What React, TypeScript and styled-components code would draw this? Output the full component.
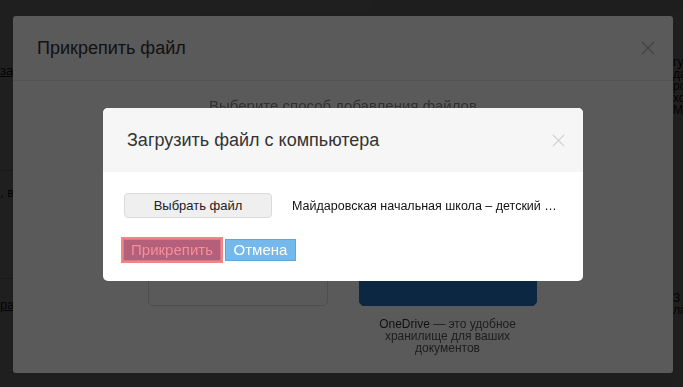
import React from 'react';
import styled, { createGlobalStyle } from 'styled-components';

const GlobalStyle = createGlobalStyle`
  html, body {
    margin: 0;
    padding: 0;
    overflow: hidden;
  }
  body {
    font-family: "Liberation Sans", Arial, sans-serif;
    color: #222;
  }
  * {
    box-sizing: border-box;
  }
`;

const App: React.FC = () => {
  return (
    <>
      <GlobalStyle />
      <Page>
        <TopStrip />
        <PageColumns>
          <LeftCol>
            <PageLink top={51}>задание к уроку</PageLink>
            <PageRule top={92} />
            <PageText top={14}>, вчера</PageText>
            <PageRule top={78} />
            <PageLink top={18}>ранее</PageLink>
          </LeftCol>
          <RightCol>
            <RightText top={44}>
              гуманитарная
              <br />
              данные
              <br />
              роботы
              <br />
              ходить
              <br />
              Материал
            </RightText>
            <RightText top={176}>
              З
              <br />
              ладно
            </RightText>
          </RightCol>
        </PageColumns>
      </Page>

      <Overlay>
        <OuterModal>
          <OuterHeader>
            <OuterTitle>Прикрепить файл</OuterTitle>
            <CloseIcon size={14} color="#bbb" />
          </OuterHeader>
          <OuterBody>
            <Hint>Выберите способ добавления файлов</Hint>
            <Sources>
              <Source>
                <SourceCard />
              </Source>
              <Source>
                <SourceCard variant="onedrive" />
                <Caption>
                  <b>OneDrive</b> — это удобное хранилище для ваших документов
                </Caption>
              </Source>
            </Sources>
          </OuterBody>
        </OuterModal>
      </Overlay>

      <Overlay>
        <Dialog>
          <DialogHeader>
            <DialogTitle>Загрузить файл с компьютера</DialogTitle>
            <CloseIcon size={13} color="#cfcfcf" />
          </DialogHeader>
          <DialogBody>
            <FileRow>
              <ChooseButton>Выбрать файл</ChooseButton>
              <FileName>Майдаровская начальная школа – детский сад отчёт за год.docx</FileName>
            </FileRow>
            <Actions>
              <ActionButton variant="attach">Прикрепить</ActionButton>
              <ActionButton variant="cancel">Отмена</ActionButton>
            </Actions>
          </DialogBody>
        </Dialog>
      </Overlay>
    </>
  );
};

export default App;

const CloseIcon: React.FC<{ size: number; color: string }> = ({ size, color }) => (
  <svg width={size} height={size} viewBox="0 0 14 14" fill="none">
    <path d="M1 1L13 13M13 1L1 13" stroke={color} strokeWidth="1.3" />
  </svg>
);

/* page behind the modals */

const Page = styled.div`
  position: relative;
  width: 683px;
  height: 387px;
  background: #f2f2f2;
  overflow: hidden;
`;

const TopStrip = styled.div`
  width: 375px;
  height: 12px;
  background: #fff;
  border-bottom-right-radius: 10px;
`;

const PageColumns = styled.div`
  display: flex;
  justify-content: space-between;
  height: 375px;
`;

const LeftCol = styled.div`
  display: flex;
  flex-direction: column;
  width: 200px;
  background: #fff;
  font-size: 13px;
`;

const PageLink = styled.a<{ top: number }>`
  margin-top: ${p => p.top}px;
  color: #222;
  text-decoration: underline;
  line-height: 15px;
  white-space: nowrap;
`;

const PageText = styled.div<{ top: number }>`
  margin-top: ${p => p.top}px;
  line-height: 15px;
  white-space: nowrap;
`;

const PageRule = styled.div<{ top: number }>`
  margin-top: ${p => p.top}px;
  height: 1px;
  background: #ccc;
`;

const RightCol = styled.div`
  display: flex;
  flex-direction: column;
  width: 10px;
  background: #fff;
  font-size: 12px;
  line-height: 12px;
  white-space: nowrap;
`;

const RightText = styled.div<{ top: number }>`
  margin-top: ${p => p.top}px;
`;

/* modal layers */

const Overlay = styled.div`
  position: fixed;
  inset: 0;
  background: rgba(0, 0, 0, 0.647);
`;

const OuterModal = styled.div`
  display: flex;
  flex-direction: column;
  width: 660px;
  height: 357px;
  margin: 16px 0 0 13px;
  background: #fff;
  border-radius: 3px;
`;

const OuterHeader = styled.div`
  display: flex;
  align-items: center;
  justify-content: space-between;
  height: 65px;
  padding: 0 18px 0 24px;
  border-bottom: 1px solid #e8e8e8;
`;

const OuterTitle = styled.div`
  font-size: 18px;
  color: #333;
`;

const OuterBody = styled.div`
  display: flex;
  flex-direction: column;
  align-items: center;
  padding-top: 17px;
`;

const Hint = styled.div`
  font-size: 15px;
  line-height: 16px;
  color: #8a8a8a;
`;

const Sources = styled.div`
  display: flex;
  gap: 31px;
  margin-top: 42px;
`;

const Source = styled.div`
  display: flex;
  flex-direction: column;
  align-items: flex-start;
  width: 180px;
`;

const SourceCard = styled.div<{ variant?: 'onedrive' }>`
  width: ${p => (p.variant === 'onedrive' ? 178 : 180)}px;
  height: 150px;
  border-radius: 5px;
  border: 1px solid ${p => (p.variant === 'onedrive' ? '#226ebb' : '#dcdcdc')};
  background: ${p => (p.variant === 'onedrive' ? '#226ebb' : '#fff')};
`;

const Caption = styled.div`
  align-self: center;
  width: 150px;
  margin: 12px 2px 0 0;
  font-size: 12px;
  line-height: 12px;
  text-align: center;
  color: #555;

  b {
    font-weight: normal;
    color: #333;
  }
`;

const Dialog = styled.div`
  width: 480px;
  margin: 108px 0 0 103px;
  background: #fff;
  border-radius: 5px;
  overflow: hidden;
`;

const DialogHeader = styled.div`
  display: flex;
  align-items: center;
  justify-content: space-between;
  height: 64px;
  padding: 0 18px 0 24px;
  background: #f6f6f6;
`;

const DialogTitle = styled.div`
  font-size: 18px;
  color: #333;
`;

const DialogBody = styled.div`
  padding: 21px 20px 20px 20px;
`;

const FileRow = styled.div`
  display: flex;
  align-items: center;
`;

const ChooseButton = styled.button`
  flex: none;
  width: 148px;
  height: 25px;
  margin-left: 1px;
  padding: 0;
  background: #efefef;
  border: 1px solid #dadada;
  border-radius: 4px;
  font-family: inherit;
  font-size: 13px;
  color: #222;
`;

const FileName = styled.div`
  flex: 1;
  min-width: 0;
  max-width: 268px;
  margin-left: 20px;
  font-size: 12.5px;
  color: #111;
  white-space: nowrap;
  overflow: hidden;
  text-overflow: ellipsis;
`;

const Actions = styled.div`
  display: flex;
  gap: 4px;
  margin-top: 21px;
`;

const ActionButton = styled.button<{ variant: 'attach' | 'cancel' }>`
  height: 22px;
  padding: 0;
  font-family: inherit;
  font-size: 15px;
  line-height: 20px;
  ${p =>
    p.variant === 'attach'
      ? `
    width: 98px;
    background: #b5607a;
    border: 1px solid #d9788b;
    outline: 2px solid #f38585;
    color: #f58d9b;
  `
      : `
    width: 71px;
    background: #74b8ec;
    border: 1px solid #5ca7e0;
    color: #fff;
  `}
`;
